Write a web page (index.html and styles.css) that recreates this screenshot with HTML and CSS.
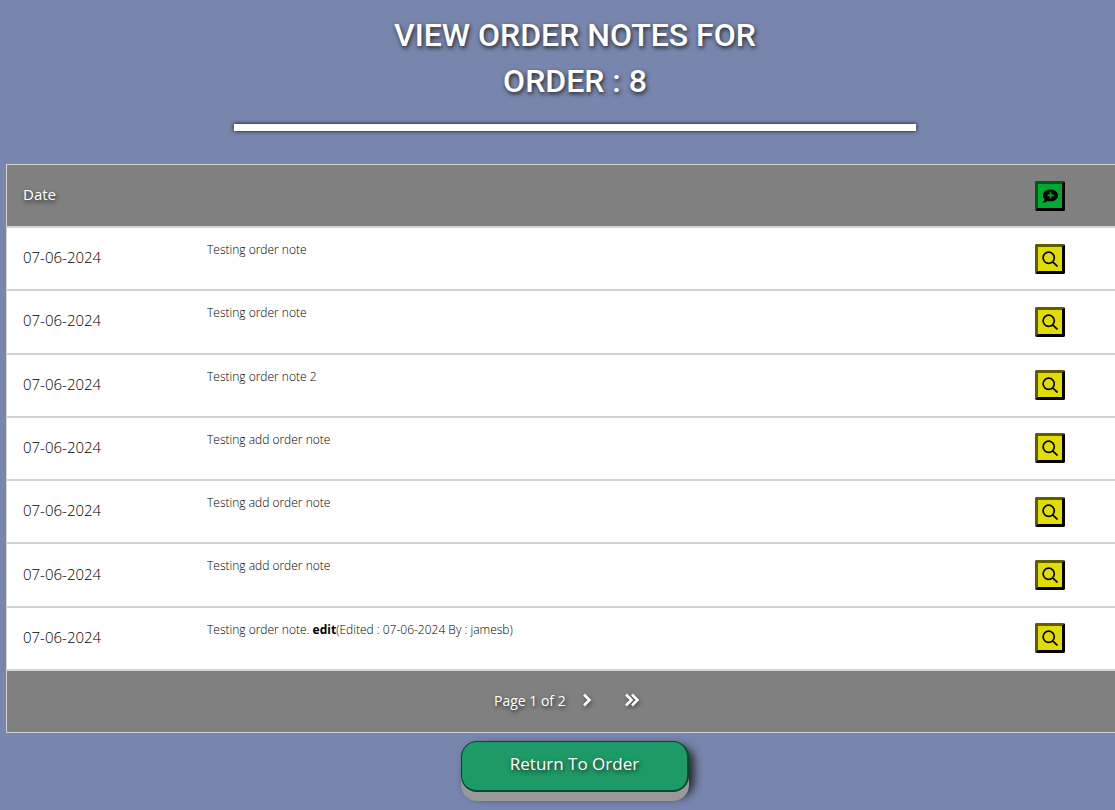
FILE: index.html
```html
<!DOCTYPE html>
<html lang="en">
<head>
<meta charset="utf-8">
<title>View Order Notes</title>
<link rel="stylesheet" href="styles.css">
</head>
<body>
<svg class="sprite" aria-hidden="true">
  <symbol id="search" viewBox="0 0 16 16"><path fill="none" stroke="#000" stroke-width="1.700" d="M6.700 1.200a5.600 5.600 0 1 0 0 11.200a5.600 5.600 0 0 0 0-11.200M10.700 10.800l4.800 4.700"/></symbol>
</svg>
<main class="page">
  <h1 class="title">VIEW ORDER NOTES FOR<br>ORDER : 8</h1>
  <hr class="rule">
  <table class="notes">
    <thead>
      <tr><th class="date" scope="col">Date</th><th class="note"></th><th class="action"><button class="icon-button add" type="button" aria-label="Add note"><svg viewBox="0 0 16 16"><path fill-rule="evenodd" d="M8.500 1.500C4.300 1.500 1 4 1 7.300c0 1.500.6 2.900 1.700 3.900-.3 1.300-1.200 2.500-2.400 3.400 2 .1 3.800-.5 5.100-1.700 1 .3 2 .4 3.100.4 4.200 0 7.500-2.600 7.500-5.900S12.700 1.500 8.500 1.500zM7.700 4.300h1.700v2.200h2.200v1.700H9.400v2.200H7.700V8.200H5.500V6.500h2.200z"/></svg></button></th></tr>
    </thead>
    <tbody>
      <tr><td class="date">07-06-2024</td><td class="note">Testing order note</td><td class="action"><button class="icon-button view" type="button" aria-label="View note"><svg><use href="#search"/></svg></button></td></tr>
      <tr><td class="date">07-06-2024</td><td class="note">Testing order note</td><td class="action"><button class="icon-button view" type="button" aria-label="View note"><svg><use href="#search"/></svg></button></td></tr>
      <tr><td class="date">07-06-2024</td><td class="note">Testing order note 2</td><td class="action"><button class="icon-button view" type="button" aria-label="View note"><svg><use href="#search"/></svg></button></td></tr>
      <tr><td class="date">07-06-2024</td><td class="note">Testing add order note</td><td class="action"><button class="icon-button view" type="button" aria-label="View note"><svg><use href="#search"/></svg></button></td></tr>
      <tr><td class="date">07-06-2024</td><td class="note">Testing add order note</td><td class="action"><button class="icon-button view" type="button" aria-label="View note"><svg><use href="#search"/></svg></button></td></tr>
      <tr><td class="date">07-06-2024</td><td class="note">Testing add order note</td><td class="action"><button class="icon-button view" type="button" aria-label="View note"><svg><use href="#search"/></svg></button></td></tr>
      <tr><td class="date">07-06-2024</td><td class="note">Testing order note. <b>edit</b>(Edited : 07-06-2024 By : jamesb)</td><td class="action"><button class="icon-button view" type="button" aria-label="View note"><svg><use href="#search"/></svg></button></td></tr>
    </tbody>
    <tfoot>
      <tr><td colspan="3"><div class="pager"><span>Page 1 of 2</span><a href="#next" aria-label="Next page"><svg width="10" height="14" viewBox="0 0 10 14"><path d="M2 1.500l5.500 5.500L2 12.500"/></svg></a><a href="#last" aria-label="Last page"><svg width="16" height="14" viewBox="0 0 16 14"><path d="M2 1.500l5.500 5.500L2 12.500M8 1.500l5.500 5.500L8 12.500"/></svg></a></div></td></tr>
    </tfoot>
  </table>
  <button class="return" type="button">Return To Order</button>
</main>
</body>
</html>
```
FILE: styles.css
```css
* { box-sizing: border-box; }
body {
  margin: 0;
  min-height: 100vh;
  overflow-x: hidden;
  background: #7885ad;
  color: #000;
  font-family: "Open Sans", "Noto Sans", sans-serif;
  font-weight: 300;
}
.sprite { display: none; }
.page {
  display: flex;
  flex-direction: column;
  align-items: center;
  margin: 0 -29px 0 6px;
  padding-top: 12px;
}
.title {
  margin: 0;
  color: #fff;
  font: 500 32px/46px Roboto, sans-serif;
  text-align: center;
  text-shadow: 1px 2px 4px #222;
}
.rule {
  width: 60%;
  height: 7px;
  margin: 20px 0 33px;
  border: 0;
  background: #fff;
  box-shadow: 0 0 4px #111;
}
.notes {
  width: 100%;
  height: 569px;
  border-spacing: 0;
  table-layout: fixed;
  border: solid #d3d3d3;
  border-width: 0 1px;
  background: #fff;
}
.notes th, .notes td {
  height: 63px;
  padding: 0;
  border: solid #d3d3d3;
  border-width: 1px 0;
  text-align: left;
  vertical-align: middle;
}
.notes thead th, .notes tfoot td {
  background: #808080;
  color: #fff;
  font-weight: 400;
  text-shadow: 1px 2px 4px #222;
}
.notes .date { width: 200px; padding: 0 0 3px 16px; font-size: 15px; }
.notes td.note { padding-top: 12px; font-size: 12px; line-height: 20px; vertical-align: top; }
.note b { font-weight: 700; }
.notes .action { width: 108px; }
.icon-button {
  display: grid;
  place-items: center;
  width: 30px;
  height: 30px;
  padding: 0;
  border: 3px solid #000;
  border-radius: 2px;
}
.icon-button svg { width: 16px; height: 16px; }
.add { border-color: #005718 #000 #000 #005718; background: #00a82d; }
.view { border-color: #5f5d00 #000 #000 #5f5d00; background: #e1dd00; }
.pager {
  display: flex;
  align-items: center;
  padding: 0 0 3px 487px;
  font-size: 14px;
}
.pager a { display: flex; margin-left: 16px; }
.pager a + a { margin-left: 32px; }
.pager svg { fill: none; stroke: #fff; stroke-width: 2.500; filter: drop-shadow(1px 2px 2px #444); }
.return {
  height: 51px;
  margin: 8px 0 18px;
  padding: 0 48px 4px;
  border: 2px solid #084a2d;
  border-width: 1px 2px 2px 1px;
  border-radius: 16px;
  background: #1d9a66;
  box-shadow: 0 9px 0 #999, 5px 5px 10px #222;
  color: #fff;
  font: 400 17px/24px "Open Sans", sans-serif;
  text-shadow: 1px 2px 4px #222;
}
```
